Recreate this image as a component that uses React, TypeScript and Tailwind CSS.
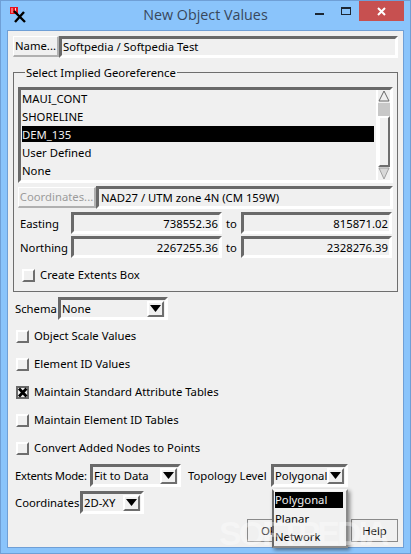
import React from "react";

const sunken = "border-[3px] border-t-[#696969] border-l-[#696969] border-r-white border-b-white";

function Check({ label, checked = false, className = "" }: { label: string; checked?: boolean; className?: string }) {
  return (
    <div className={`flex items-center h-[18px] ${className}`}>
      <div className="relative w-[13px] h-[13px] bg-[#f0f0f0] border-[2px] border-t-white border-l-white border-r-[#6e6e6e] border-b-[#6e6e6e] shrink-0">
        {checked && (
          <svg viewBox="0 0 13 13" className="absolute -left-[2px] -top-[2px] w-[13px] h-[13px]">
            <rect x="0" y="0" width="13" height="2" fill="#696969" />
            <rect x="0" y="0" width="2" height="13" fill="#696969" />
            <path d="M3 2.5 L10.5 10.5 M10.5 2.5 L3 10.5" stroke="#000" strokeWidth="2.8" />
          </svg>
        )}
      </div>
      <span className="ml-[5px] whitespace-nowrap">{label}</span>
    </div>
  );
}

function Arrow() {
  return (
    <div className="w-[17px] h-[16px] bg-[#f0f0f0] border-[2px] border-t-white border-l-white border-r-[#6e6e6e] border-b-[#6e6e6e] flex items-center justify-center shrink-0">
      <svg viewBox="0 0 11 7" className="w-[11px] h-[7px]">
        <path d="M0 0 H11 L5.5 7 Z" fill="#000" />
      </svg>
    </div>
  );
}

function Select({ value, className = "" }: { value: string; className?: string }) {
  return (
    <div className={`${sunken} h-[23px] flex items-center justify-between pl-[1px] pr-[1px] ${className}`}>
      <span className="whitespace-nowrap pt-[1px]">{value}</span>
      <Arrow />
    </div>
  );
}

function Range({ label, a, b, className = "" }: { label: string; a: string; b: string; className?: string }) {
  return (
    <div className={`flex items-center h-[22px] ${className}`}>
      <span className="w-[53px] pl-[2px] pt-[2px] whitespace-nowrap">{label}</span>
      <div className={`${sunken} w-[151px] h-[22px] flex items-center justify-end pr-[1px] pt-[1px]`}>{a}</div>
      <span className="w-[19px] text-center pt-[2px]">to</span>
      <div className={`${sunken} w-[151px] h-[22px] flex items-center justify-end pr-[1px] pt-[1px]`}>{b}</div>
    </div>
  );
}

function ListRow({ text, selected = false }: { text: string; selected?: boolean }) {
  return (
    <div className="h-[18px] flex items-start">
      <span className={`w-[352px] h-[16px] leading-[18px] ${selected ? "bg-black text-[#f0f0f0]" : ""}`}>{text}</span>
    </div>
  );
}

export default function App() {
  return (
    <div
      className="relative w-[411px] h-[554px] overflow-hidden flex flex-col bg-[#8ac4fb] border border-[#6f9fd6] text-[11.3px] leading-none text-black"
      style={{ fontFamily: '"Noto Sans", Tahoma, sans-serif' }}
    >
      <div className="relative h-[29px] flex items-start shrink-0">
        <svg viewBox="0 0 18 18" className="absolute left-[8px] top-[5px] w-[18px] h-[18px]">
          <rect x="1" y="1" width="8" height="7" fill="#e8101c" />
          <path d="M3 2v5M6.5 2v5" stroke="#fff" strokeWidth="0.8" />
          <path d="M5 5 L16 16 M15 6 L6 16" stroke="#000" strokeWidth="2.4" />
        </svg>
        <div
          className="w-full pt-[4px] text-center text-[14.3px] leading-[20px] text-[#38475c]"
          style={{ fontFamily: '"Open Sans", "Noto Sans", sans-serif' }}
        >
          New Object Values
        </div>
        <div className="absolute left-[314px] top-[12px] w-[9px] h-[2px] bg-[#1c2733]" />
        <div className="absolute left-[340px] top-[6px] w-[10px] h-[8px] border border-t-[2px] border-[#1c2733]" />
        <div className="absolute left-[358px] top-0 w-[45px] h-[20px] bg-[#c75050] flex items-center justify-center">
          <svg viewBox="0 0 9 9" className="w-[9px] h-[9px]">
            <path d="M1 1 L8 8 M8 1 L1 8" stroke="#fff" strokeWidth="2" />
          </svg>
        </div>
      </div>

      <div className="mx-[6px] mb-[6px] flex-1 bg-[#f0f0f0] border border-[#6f9fd6] p-[5px] flex flex-col">
        <div className="flex h-[22px]">
          <div className="w-[46px] h-[21px] border-t border-l border-r-[2px] border-b-[2px] border-t-white border-l-white border-r-[#b0b0b0] border-b-[#b0b0b0] flex items-center justify-center">
            Name...
          </div>
          <div className={`${sunken} flex-1 flex items-center pl-[1px]`}>Softpedia / Softpedia Test</div>
        </div>

        <div className="relative mt-[14px] h-[220px] border border-[#6e6e6e] px-[4px] pt-[14px]">
          <span className="absolute left-[11px] -top-[7px] bg-[#f0f0f0] px-[1px] h-[14px] leading-[14px]">
            Select Implied Georeference
          </span>
          <div className={`${sunken} h-[96px] flex`}>
            <div className="flex-1 pl-[1px]">
              <ListRow text="MAUI_CONT" />
              <ListRow text="SHORELINE" />
              <ListRow text="DEM_135" selected />
              <ListRow text="User Defined" />
              <ListRow text="None" />
            </div>
            <div className="w-[14px] h-full flex flex-col border-l-[2px] border-l-white">
              <svg viewBox="0 0 12 13" className="w-[12px] h-[13px] shrink-0">
                <path d="M6 1 L11 11 H1 Z" fill="#f0f0f0" stroke="#696969" />
              </svg>
              <div className="h-[13px] bg-[#c8c8c8] shrink-0" />
              <div className="flex-1 border-[2px] border-t-white border-l-white border-r-[#6e6e6e] border-b-[#6e6e6e]" />
              <svg viewBox="0 0 12 13" className="w-[12px] h-[13px] shrink-0">
                <path d="M6 12 L11 1 H1 Z" fill="#d8d8d8" stroke="#a0a0a0" />
              </svg>
            </div>
          </div>

          <div className="flex h-[23px] mt-[3px]">
            <div className="w-[78px] h-[21px] mt-[1px] border-t border-l border-r-[2px] border-b-[2px] border-t-white border-l-white border-r-[#b0b0b0] border-b-[#b0b0b0] flex items-center justify-center text-[#9c9c9c]">
              Coordinates...
            </div>
            <div className={`${sunken} flex-1 flex items-center pl-[2px]`}>NAD27 / UTM zone 4N (CM 159W)</div>
          </div>
          <Range label="Easting" a="738552.36" b="815871.02" className="mt-[3px]" />
          <Range label="Northing" a="2267255.36" b="2328276.39" className="mt-[2px]" />
          <Check label="Create Extents Box" className="mt-[8px] ml-[4px]" />
        </div>

        <div className="flex items-center h-[23px] mt-[5px]">
          <span className="w-[45px] pl-[2px] pt-[1px]">Schema</span>
          <Select value="None" className="w-[110px]" />
        </div>

        <Check label="Object Scale Values" className="mt-[7px] ml-[3px]" />
        <Check label="Element ID Values" className="mt-[10px] ml-[3px]" />
        <Check label="Maintain Standard Attribute Tables" checked className="mt-[10px] ml-[3px]" />
        <Check label="Maintain Element ID Tables" className="mt-[10px] ml-[3px]" />
        <Check label="Convert Added Nodes to Points" className="mt-[10px] ml-[3px]" />

        <div className="flex items-center h-[23px] mt-[7px]">
          <span className="w-[77px] pl-[2px] pt-[1px] whitespace-nowrap tracking-[-0.3px]">Extents Mode:</span>
          <Select value="Fit to Data" className="w-[91px]" />
          <span className="w-[90px] pl-[7px] pt-[1px] whitespace-nowrap">Topology Level</span>
          <Select value="Polygonal" className="w-[77px]" />
        </div>
        <div className="flex items-center h-[23px] mt-[4px]">
          <span className="w-[67px] pl-[2px] whitespace-nowrap">Coordinates</span>
          <Select value="2D-XY" className="w-[64px]" />
        </div>

        <div className="flex justify-between mt-[5px] pl-[234px]">
          <div className="w-[90px] h-[23px] border border-[#8a8a8a] flex items-center justify-start pl-[13px]">OK</div>
          <div className="w-[47px] h-[23px] border border-[#8a8a8a] flex items-center justify-center">Help</div>
        </div>
      </div>

      <div className="absolute left-[271px] top-[488px] w-[76px] h-[59px] bg-[#f0f0f0] border-[2px] border-t-[#f8f8f8] border-l-[#696969] border-r-[#8a8a8a] border-b-[#8a8a8a] pt-[1px] pl-[1px] shadow-[2px_2px_4px_rgba(0,0,0,0.45)]">
        <div className="h-[16px] leading-[16px] bg-black text-[#f0f0f0] w-[68px]">Polygonal</div>
        <div className="h-[18px] leading-[18px] mt-[2px]">Planar</div>
        <div className="h-[18px] leading-[18px]">Network</div>
      </div>
      <div
        className="absolute left-[218px] top-[513px] text-[34px] leading-[38px] tracking-[-3px] font-bold text-white/35 whitespace-nowrap"
        style={{ fontFamily: '"Liberation Sans", sans-serif' }}
      >
        SOFTPEDIA
      </div>
    </div>
  );
}
